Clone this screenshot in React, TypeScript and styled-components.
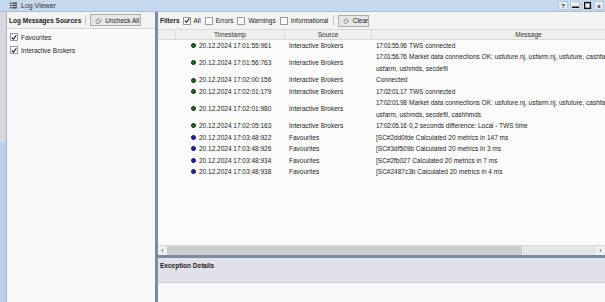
import React from 'react';
import styled, { createGlobalStyle } from 'styled-components';

const GlobalStyle = createGlobalStyle`
    html, body {
        margin: 0;
        padding: 0;
        background: #f8f8f8;
    }
    body {
        font-family: "Liberation Sans", Arial, sans-serif;
        font-size: 6.5px;
        color: #1e1e1e;
    }
`;

const Window = styled.div`
    width: 605px;
    height: 302px;
    display: flex;
    flex-direction: column;
    overflow: hidden;
    background: #f8f8f8;
`;

const TitleBar = styled.div`
    height: 11px;
    flex: none;
    display: flex;
    align-items: center;
    background: #c6d8ee;
    border-bottom: 1px solid #a9bdd6;
    padding-left: 10px;
    gap: 4px;
`;

const TitleText = styled.span`
    font-size: 7px;
    color: #333;
    flex: 1;
`;

const TitleButtons = styled.div`
    display: flex;
    gap: 2px;
    padding-right: 1px;
`;

const TitleButton = styled.div`
    width: 10px;
    height: 9px;
    display: flex;
    align-items: center;
    justify-content: center;
    background: #e4ecf6;
    border: 1px solid #b7c7dc;
    box-sizing: border-box;
    font-size: 6px;
    font-weight: bold;
    color: #222;
`;

const Body = styled.div`
    flex: 1;
    display: flex;
    min-height: 0;
`;

const LeftEdge = styled.div`
    width: 7px;
    flex: none;
    background: linear-gradient(#d8d8dc 0 45%, #bcd0e8 45%);
    border-right: 1px solid #9fb6d2;
    box-sizing: border-box;
`;

const SourcesPanel = styled.div`
    width: 148px;
    flex: none;
    display: flex;
    flex-direction: column;
    background: #f9f9f9;
`;

const PanelHeader = styled.div`
    height: 17px;
    flex: none;
    display: flex;
    align-items: center;
    gap: 3px;
    padding-left: 2px;
    background: #f3f3f3;
    border-bottom: 1px solid #d5d5d5;
    box-sizing: border-box;
`;

const Bold = styled.span`
    font-weight: bold;
    color: #222;
`;

const Divider = styled.div`
    width: 1px;
    height: 11px;
    background: #c9c9c9;
    margin: 0 1px;
`;

const ToolButton = styled.div<{ $w: number }>`
    width: ${p => p.$w}px;
    height: 12px;
    display: flex;
    align-items: center;
    gap: 3px;
    padding-left: 4px;
    box-sizing: border-box;
    background: #e6e6e6;
    border: 1px solid #adadad;
    color: #222;
`;

const SourceList = styled.div`
    padding: 4px 0 0 3px;
    display: flex;
    flex-direction: column;
    gap: 5px;
`;

const CheckRow = styled.label`
    display: flex;
    align-items: center;
    gap: 3px;
`;

const Box = styled.span`
    width: 8px;
    height: 8px;
    box-sizing: border-box;
    border: 1px solid #9a9a9a;
    background: #fdfdfd;
    display: inline-flex;
    align-items: center;
    justify-content: center;
    flex: none;
`;

const VSplitter = styled.div`
    width: 3px;
    flex: none;
    background: #7b8ca2;
`;

const MainPanel = styled.div`
    flex: 1;
    min-width: 0;
    display: flex;
    flex-direction: column;
`;

const FilterBar = styled(PanelHeader)`
    gap: 3px;
    border-bottom: none;
    background: #f3f3f3;
`;

const FilterItem = styled(CheckRow)`
    margin-right: 1px;
`;

const GridArea = styled.div`
    flex: 1;
    min-height: 0;
    overflow: hidden;
    background: #fafafa;
`;

const Table = styled.div`
    width: 528px;
`;

const HeaderRow = styled.div`
    display: grid;
    grid-template-columns: 18px 109px 87px 314px;
    height: 11px;
    background: #efefef;
    border-top: 1px solid #d8d8d8;
    border-bottom: 1px solid #d8d8d8;
    box-sizing: border-box;
`;

const HeaderCell = styled.div`
    border-right: 1px solid #d8d8d8;
    text-align: center;
    line-height: 9px;
    color: #333;
`;

const Row = styled.div`
    display: grid;
    grid-template-columns: 18px 109px 87px 314px;
    align-items: center;
    line-height: 11.45px;
`;

const Stamp = styled.div`
    grid-column: 2;
    display: flex;
    align-items: center;
    padding-left: 15px;
    gap: 3px;
`;

const Dot = styled.span<{ $color: string }>`
    width: 5px;
    height: 5px;
    border-radius: 50%;
    background: ${p => p.$color};
    border: 1px solid #1a1a1a;
    box-sizing: border-box;
    flex: none;
`;

const Cell = styled.div`
    padding-left: 4px;
    white-space: nowrap;
`;

const Time = styled.span`
    display: inline-block;
    width: 33px;
    letter-spacing: -0.35px;
`;

const HScroll = styled.div`
    height: 9px;
    flex: none;
    display: flex;
    align-items: stretch;
    background: #e6e6e6;
    border-top: 1px solid #dadada;
`;

const ScrollArrow = styled.div`
    width: 9px;
    display: flex;
    align-items: center;
    justify-content: center;
    font-size: 7px;
    color: #333;
    background: #f0f0f0;
`;

const Thumb = styled.div`
    width: 355px;
    background: #cdcdcd;
`;

const Track = styled.div`
    flex: 1;
`;

const HSplitter = styled.div`
    height: 3px;
    flex: none;
    background: #7b8ca2;
`;

const ExceptionHeader = styled.div`
    height: 25px;
    flex: none;
    background: #e1e1eb;
    border-bottom: 1px solid #c9c9d0;
    box-sizing: border-box;
    padding: 4px 2px;
`;

const ExceptionBody = styled.div`
    height: 19px;
    flex: none;
    background: #f8f8f8;
`;

const Check = () => (
    <svg width="7" height="7" viewBox="0 0 7 7">
        <path d="M1 3.6 L2.8 5.6 L6.2 1" fill="none" stroke="#111" strokeWidth="1.2" />
    </svg>
);

const Eraser = () => (
    <svg width="7" height="7" viewBox="0 0 7 7">
        <path d="M0.8 4.4 L3.6 1.2 L6.2 3.6 L3.6 6.4 L1.8 6.4 Z" fill="#fff" stroke="#555" strokeWidth="0.7" />
        <path d="M2.2 3 L4.8 5.2" stroke="#555" strokeWidth="0.7" />
    </svg>
);

const LogIcon = () => (
    <svg width="7" height="7" viewBox="0 0 7 7">
        <rect x="0" y="0.5" width="1.5" height="1.3" fill="#3a3a3a" />
        <rect x="2.3" y="0.5" width="4.7" height="1.3" fill="#3a3a3a" />
        <rect x="0" y="2.8" width="1.5" height="1.3" fill="#3a3a3a" />
        <rect x="2.3" y="2.8" width="4.7" height="1.3" fill="#3a3a3a" />
        <rect x="0" y="5.1" width="1.5" height="1.3" fill="#3a3a3a" />
        <rect x="2.3" y="5.1" width="4.7" height="1.3" fill="#3a3a3a" />
    </svg>
);

type LogRow = {
    stamp: string;
    source: string;
    color: string;
    time?: string;
    lines: string[];
};

const GREEN = '#0f7a12';
const BLUE = '#1020f0';

const rows: LogRow[] = [
    { stamp: '20.12.2024 17:01:55:961', source: 'Interactive Brokers', color: GREEN, time: '17:01:55.96', lines: ['TWS connected'] },
    { stamp: '20.12.2024 17:01:56:763', source: 'Interactive Brokers', color: GREEN, time: '17:01:56.76', lines: ['Market data connections OK: usfuture.nj, usfarm.nj, usfuture, cashfarm, eufarm,', 'usfarm, ushmds, secdefil'] },
    { stamp: '20.12.2024 17:02:00:156', source: 'Interactive Brokers', color: GREEN, lines: ['Connected'] },
    { stamp: '20.12.2024 17:02:01:179', source: 'Interactive Brokers', color: GREEN, time: '17:02:01.17', lines: ['TWS connected'] },
    { stamp: '20.12.2024 17:02:01:980', source: 'Interactive Brokers', color: GREEN, time: '17:02:01.98', lines: ['Market data connections OK: usfuture.nj, usfarm.nj, usfuture, cashfarm, eufarm,', 'usfarm, ushmds, secdefil, cashhmds'] },
    { stamp: '20.12.2024 17:02:05:163', source: 'Interactive Brokers', color: GREEN, time: '17:02:05.16', lines: ['0,2 seconds difference: Local - TWS time'] },
    { stamp: '20.12.2024 17:03:48:922', source: 'Favourites', color: BLUE, lines: ['[SC#2dd0fde Calculated 20 metrics in 147 ms'] },
    { stamp: '20.12.2024 17:03:48:926', source: 'Favourites', color: BLUE, lines: ['[SC#3df509b Calculated 20 metrics in 3 ms'] },
    { stamp: '20.12.2024 17:03:48:934', source: 'Favourites', color: BLUE, lines: ['[SC#2fb027 Calculated 20 metrics in 7 ms'] },
    { stamp: '20.12.2024 17:03:48:938', source: 'Favourites', color: BLUE, lines: ['[SC#2487c3b Calculated 20 metrics in 4 ms'] },
];

function App(): JSX.Element {
    return (
        <>
            <GlobalStyle />
            <Window>
                <TitleBar>
                    <LogIcon />
                    <TitleText>Log Viewer</TitleText>
                    <TitleButtons>
                        <TitleButton>?</TitleButton>
                        <TitleButton>
                            <svg width="7" height="7" viewBox="0 0 7 7"><rect x="0" y="4.5" width="7" height="1.5" fill="#111" /></svg>
                        </TitleButton>
                        <TitleButton>
                            <svg width="7" height="7" viewBox="0 0 7 7"><rect x="0.5" y="0.5" width="6" height="6" fill="none" stroke="#111" strokeWidth="1.6" /></svg>
                        </TitleButton>
                        <TitleButton>x</TitleButton>
                    </TitleButtons>
                </TitleBar>
                <Body>
                    <LeftEdge />
                    <SourcesPanel>
                        <PanelHeader>
                            <Bold>Log Messages Sources</Bold>
                            <Divider />
                            <ToolButton $w={51}><Eraser />Uncheck All</ToolButton>
                        </PanelHeader>
                        <SourceList>
                            <CheckRow><Box><Check /></Box>Favourites</CheckRow>
                            <CheckRow><Box><Check /></Box>Interactive Brokers</CheckRow>
                        </SourceList>
                    </SourcesPanel>
                    <VSplitter />
                    <MainPanel>
                        <FilterBar>
                            <Bold>Filters</Bold>
                            <FilterItem><Box><Check /></Box>All</FilterItem>
                            <FilterItem><Box />Errors</FilterItem>
                            <FilterItem><Box />Warnings</FilterItem>
                            <FilterItem><Box />Informational</FilterItem>
                            <Divider />
                            <ToolButton $w={31}><Eraser />Clear</ToolButton>
                        </FilterBar>
                        <GridArea>
                            <Table>
                                <HeaderRow>
                                    <HeaderCell />
                                    <HeaderCell>Timestamp</HeaderCell>
                                    <HeaderCell>Source</HeaderCell>
                                    <HeaderCell>Message</HeaderCell>
                                </HeaderRow>
                                {rows.map(r => (
                                    <Row key={r.stamp}>
                                        <Stamp><Dot $color={r.color} />{r.stamp}</Stamp>
                                        <Cell>{r.source}</Cell>
                                        <Cell>
                                            {r.time && <Time>{r.time}</Time>}
                                            {r.lines[0]}
                                            {r.lines.slice(1).map(l => <div key={l}>{l}</div>)}
                                        </Cell>
                                    </Row>
                                ))}
                            </Table>
                        </GridArea>
                        <HScroll>
                            <ScrollArrow>‹</ScrollArrow>
                            <Thumb />
                            <Track />
                            <ScrollArrow>›</ScrollArrow>
                        </HScroll>
                        <HSplitter />
                        <ExceptionHeader><Bold>Exception Details</Bold></ExceptionHeader>
                        <ExceptionBody />
                    </MainPanel>
                </Body>
            </Window>
        </>
    );
}

export default App;
